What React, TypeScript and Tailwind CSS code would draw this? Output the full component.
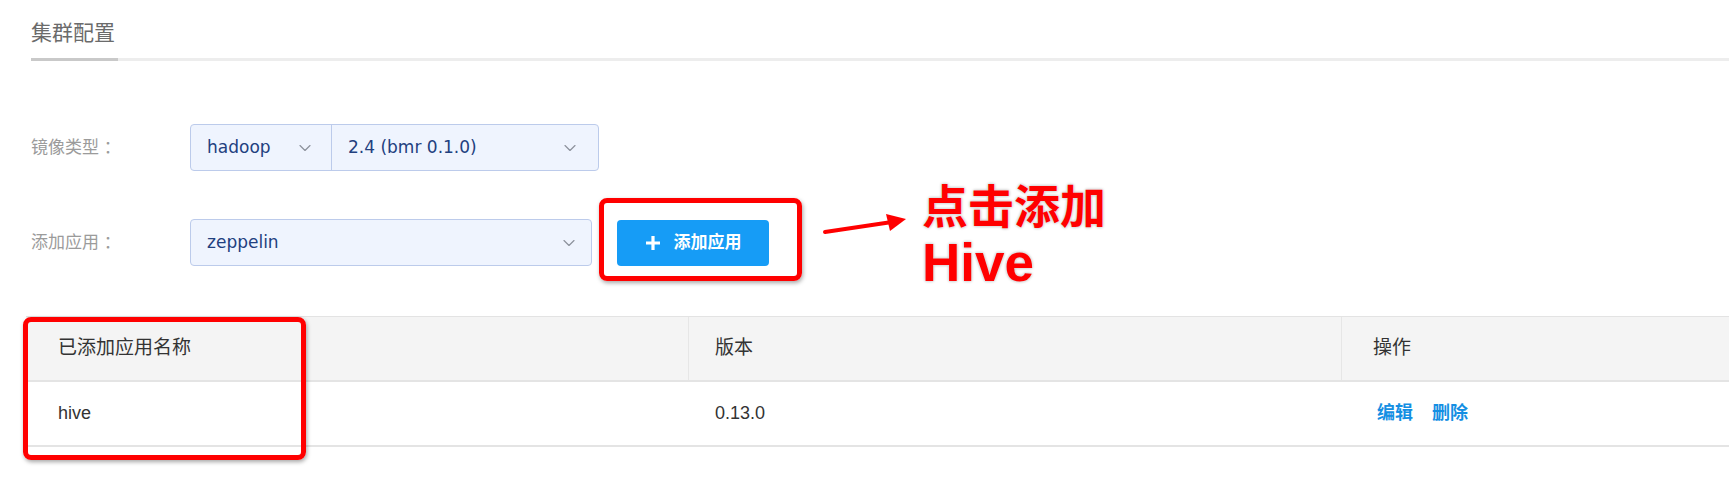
import React from 'react';
import { ChevronDown } from 'lucide-react';

const cjk = "font-['Liberation_Sans','Noto_Sans_CJK_SC',sans-serif]";

const Select: React.FC<{ value: string; className?: string }> = ({ value, className }) => (
  <div className={`flex items-center justify-between h-full px-4 ${className ?? ''}`}>
    <span className="font-['DejaVu_Sans','Noto_Sans_CJK_SC',sans-serif] text-[17px] text-[#22407f]">{value}</span>
    <ChevronDown size={20} strokeWidth={1.4} className="text-[#8c929c]" />
  </div>
);

const App: React.FC = () => {
  return (
    <div className={`relative w-[1729px] h-[503px] bg-white overflow-hidden ${cjk}`}>
      {/* Tab header */}
      <div className="pl-[31px] pt-[19px]">
        <div className="text-[21px] text-[#6b6b6b] leading-[28px] pb-[11px] w-[87px]">集群配置</div>
        <div className="flex h-[3px]">
          <div className="w-[87px] bg-[#c9c9c9]" />
          <div className="flex-1 bg-[#ededed]" />
        </div>
      </div>

      {/* Form */}
      <div className="pl-[31px] pt-[63px] flex flex-col gap-[48px]">
        <div className="flex items-center h-[47px]">
          <div className="w-[159px] text-[17px] text-[#9b9b9b]">镜像类型 ：</div>
          <div className="flex h-full w-[409px] rounded-[4px] border border-[#bccbeb] bg-[#eff4fe]">
            <Select value="hadoop" className="w-[141px] border-r border-[#bccbeb]" />
            <Select value="2.4 (bmr 0.1.0)" className="flex-1 pr-[18px]" />
          </div>
        </div>
        <div className="flex items-center h-[47px]">
          <div className="w-[159px] text-[17px] text-[#9b9b9b]">添加应用 ：</div>
          <div className="h-full w-[402px] rounded-[4px] border border-[#bccbeb] bg-[#eff4fe]">
            <Select value="zeppelin" className="pr-[12px]" />
          </div>
          <button className="ml-[25px] flex items-center justify-center gap-[13px] w-[152px] h-[46px] rounded-[4px] bg-[#169cf6] text-white text-[17px] font-semibold">
            <svg width="16" height="16" viewBox="0 0 16 16">
              <path d="M8 1v14M1 8h14" stroke="white" strokeWidth="3.2" />
            </svg>
            添加应用
          </button>
        </div>
      </div>

      {/* Table */}
      <div className="ml-[26px] mt-[50px] border-t border-[#e3e3e3] text-[#333]">
        <div className="flex h-[65px] items-center bg-[#f4f4f4] border-b-2 border-[#e4e4e4] text-[19px]">
          <div className="w-[663px] h-full flex items-center pl-[32px] border-r border-[#e6e6e6]">已添加应用名称</div>
          <div className="w-[653px] h-full flex items-center pl-[26px] border-r border-[#e6e6e6]">版本</div>
          <div className="flex-1 h-full flex items-center pl-[31px]">操作</div>
        </div>
        <div className="flex h-[65px] items-center border-b-2 border-[#e4e4e4] text-[18px]">
          <div className="w-[663px] pl-[32px]">hive</div>
          <div className="w-[653px] pl-[26px]">0.13.0</div>
          <div className="flex-1 pl-[35px] flex gap-[19px] text-[#148fe3] font-bold text-[18px]">
            <span>编辑</span>
            <span>删除</span>
          </div>
        </div>
      </div>

      {/* Annotations */}
      <div className="absolute left-[599px] top-[198px] w-[203px] h-[83px] rounded-[8px] border-[5px] border-[#ff0000] shadow-[1px_2px_4px_rgba(0,0,0,0.35)]" />
      <div className="absolute left-[23px] top-[317px] w-[283px] h-[143px] rounded-[8px] border-[5px] border-[#ff0000] shadow-[1px_2px_4px_rgba(0,0,0,0.35)]" />
      <svg className="absolute left-[822px] top-[210px]" width="90" height="30" viewBox="0 0 90 30">
        <path d="M3 22 L70 12" stroke="#ff0000" strokeWidth="4" strokeLinecap="round" />
        <path d="M64 4 L84 9 L68 21 Z" fill="#ff0000" />
      </svg>
      <div className="absolute left-[922px] top-[179px] text-[#ff0000] font-bold leading-[56px] [text-shadow:0_0_2px_#fff,0_0_3px_rgba(0,0,0,0.45)]">
        <div className="text-[46px]">点击添加</div>
        <div className="text-[53px] font-['Liberation_Sans',sans-serif]">Hive</div>
      </div>
    </div>
  );
};

export default App;
